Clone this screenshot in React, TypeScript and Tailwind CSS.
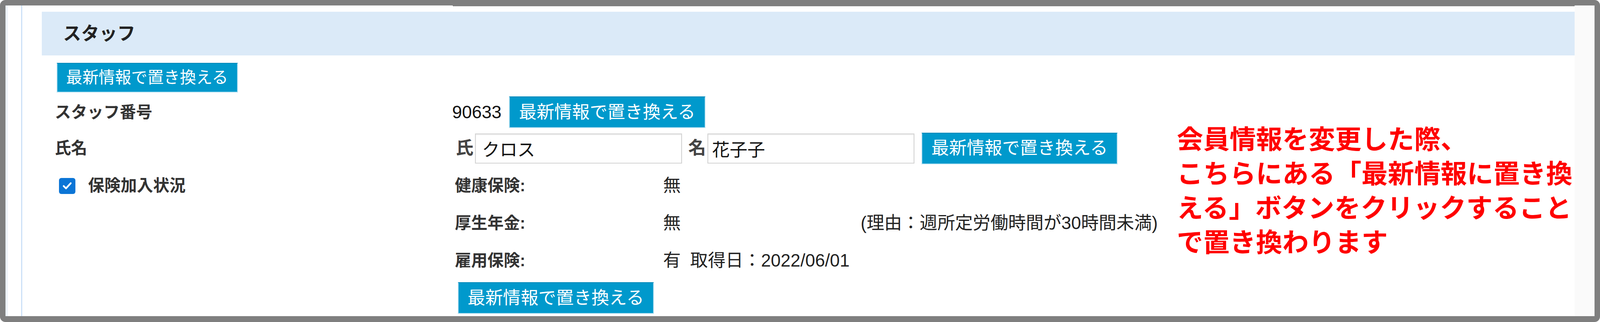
import React from 'react'

// Horizontal sizes are in vw so the page keeps its proportions at any window width
const btn =
  'flex items-center border-2 border-[#b5e0f1] border-t-[#0089ba] bg-[#0099cc] text-white leading-none whitespace-nowrap'

function ReplaceButton({ small = false }: { small?: boolean }) {
  return (
    <button
      className={
        small
          ? `${btn} h-[76px] px-[0.55vw] text-[1.016vw]`
          : `${btn} h-[81px] px-[0.57vw] text-[1.107vw]`
      }
    >
      最新情報で置き換える
    </button>
  )
}

function InsuranceRow({ label, value, note }: { label: string; value: React.ReactNode; note?: string }) {
  return (
    <div className="flex h-[96px] items-center">
      <div className="w-[13.01vw] text-[1.016vw] font-bold leading-none text-[#333]">{label}</div>
      <div className="w-[12.35vw] whitespace-nowrap text-[1.107vw] leading-none text-[#222]">{value}</div>
      {note && <div className="whitespace-nowrap text-[1.107vw] leading-none text-[#222]">{note}</div>}
    </div>
  )
}

export default function App() {
  return (
    <div className="relative h-[825px] w-full bg-white font-['Liberation_Sans','Noto_Sans_CJK_JP',sans-serif]">
      {/* Frame */}
      <div className="h-full rounded-[14px] bg-[#7f7f7f] pt-[14px] pl-[14px] pr-[14px] pb-[15px]">
        <div className="flex h-full bg-white">
          <div className="w-[6px] bg-[#edf3fa]" />
          <div className="w-[34px]" />

          {/* Panel */}
          <section className="flex flex-1 flex-col border-l-[3px] border-[#cde1f7]">
            <div className="flex h-[2px]">
              <div className="w-[26.9vw]" />
              <div className="flex-1 bg-[#7f7f7f]" />
            </div>

            {/* Header */}
            <header className="mt-[14px] ml-[1.22vw] flex h-[112px] items-center bg-[#dbeaf8] pl-[1.33vw]">
              <h2 className="text-[1.13vw] font-bold leading-none text-[#222]">スタッフ</h2>
            </header>

            <div className="mt-[19px] ml-[2.145vw] flex">
              <ReplaceButton small />
            </div>

            <div className="pl-[2.03vw]">
              {/* Staff number */}
              <div className="mt-[10px] flex h-[81px] items-center">
                <div className="w-[24.84vw] text-[1.016vw] font-bold leading-none text-[#333]">スタッフ番号</div>
                <span className="mr-[0.474vw] text-[1.107vw] leading-none text-[#111]">90633</span>
                <ReplaceButton />
              </div>

              {/* Name */}
              <div className="mt-[11px] flex h-[82px] items-center">
                <div className="w-[24.84vw] text-[1.016vw] font-bold leading-none text-[#333]">氏名</div>
                <span className="ml-[0.226vw] text-[1.107vw] font-bold leading-none text-[#444]">氏</span>
                <input
                  readOnly
                  value="クロス"
                  className="ml-[4px] h-[77px] w-[12.94vw] border-2 border-[#d2d2d2] bg-white pl-[0.384vw] text-[1.107vw] text-[#111] shadow-[inset_0_2px_3px_rgba(0,0,0,0.08)] outline-none"
                />
                <span className="ml-[0.384vw] text-[1.107vw] font-bold leading-none text-[#444]">名</span>
                <input
                  readOnly
                  value="花子子"
                  className="ml-[4px] h-[77px] w-[12.94vw] border-2 border-[#d2d2d2] bg-white pl-[0.23vw] text-[1.107vw] text-[#111] shadow-[inset_0_2px_3px_rgba(0,0,0,0.08)] outline-none"
                />
                <div className="ml-[0.43vw] flex">
                  <ReplaceButton />
                </div>
              </div>

              {/* Insurance */}
              <div className="mt-[7px] flex">
                <div className="flex h-[96px] w-[24.84vw] items-center pl-[0.27vw]">
                  <span className="flex h-[41px] w-[42px] items-center justify-center rounded-[6px] bg-[#0b75d6]">
                    <svg viewBox="0 0 16 16" className="h-[30px] w-[30px]" fill="none">
                      <path d="M3.2 8.4l3.2 3.1 6.4-7" stroke="white" strokeWidth="2.4" strokeLinecap="round" strokeLinejoin="round" />
                    </svg>
                  </span>
                  <span className="ml-[0.79vw] text-[1.016vw] font-bold leading-none text-[#333]">保険加入状況</span>
                </div>
                <div className="flex flex-col pl-[7px]">
                  <InsuranceRow label="健康保険:" value="無" />
                  <InsuranceRow label="厚生年金:" value="無" note="(理由：週所定労働時間が30時間未満)" />
                  <InsuranceRow
                    label="雇用保険:"
                    value={
                      <>
                        有<span className="ml-[0.587vw]">取得日：2022/06/01</span>
                      </>
                    }
                  />
                  <div className="mt-[7px] ml-[7px] flex">
                    <ReplaceButton />
                  </div>
                </div>
              </div>
            </div>
          </section>

          <div className="w-[51px] bg-[#fafafa]" />
        </div>
      </div>

      {/* Annotation */}
      <p className="absolute left-[73.55vw] top-[314px] whitespace-nowrap text-[1.649vw] font-bold leading-[88px] text-[#ff0000]">
        会員情報を変更した際、
        <br />
        こちらにある「最新情報に置き換
        <br />
        える」ボタンをクリックすること
        <br />
        で置き換わります
      </p>
    </div>
  )
}
